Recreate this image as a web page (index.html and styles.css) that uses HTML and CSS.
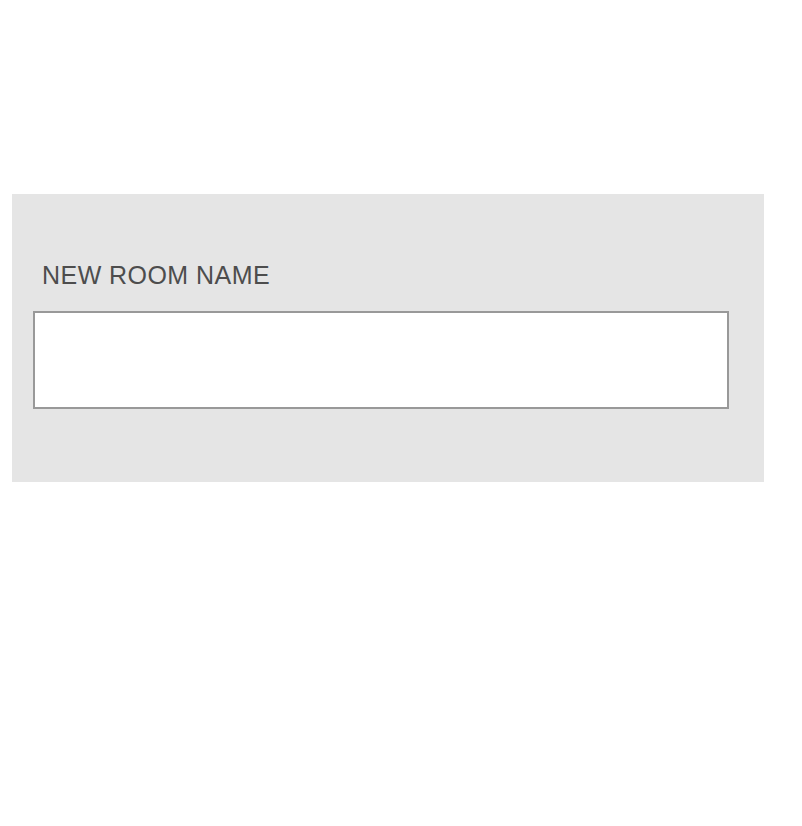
FILE: index.html
```html
<!DOCTYPE html>
<html lang="en">
<head>
<meta charset="utf-8">
<title>New room</title>
<link rel="stylesheet" href="styles.css">
</head>
<body>
<div class="page">
  <form class="panel">
    <label class="label" for="room">NEW ROOM NAME</label>
    <input class="field" id="room" type="text">
  </form>
</div>
</body>
</html>
```

FILE: styles.css
```css
html, body {
  margin: 0;
  padding: 0;
  background: #ffffff;
}

.page {
  padding: 194px 0 0 12px;
}

.panel {
  box-sizing: border-box;
  width: 752px;
  height: 288px;
  margin: 0;
  padding: 66px 35px 0 21px;
  background: #e5e5e5;
  display: flex;
  flex-direction: column;
  align-items: stretch;
}

.label {
  display: block;
  margin-left: 9px;
  font-family: "Liberation Sans", Arial, sans-serif;
  font-size: 25px;
  line-height: 30px;
  letter-spacing: 0.45px;
  color: #4d4d4d;
}

.field {
  box-sizing: border-box;
  display: block;
  width: 696px;
  height: 98px;
  margin: 21px 0 0 0;
  padding: 0 10px;
  border: 2px solid #999999;
  border-radius: 0;
  background: #ffffff;
  outline: none;
  font-family: "Liberation Sans", Arial, sans-serif;
  font-size: 24px;
}
```
